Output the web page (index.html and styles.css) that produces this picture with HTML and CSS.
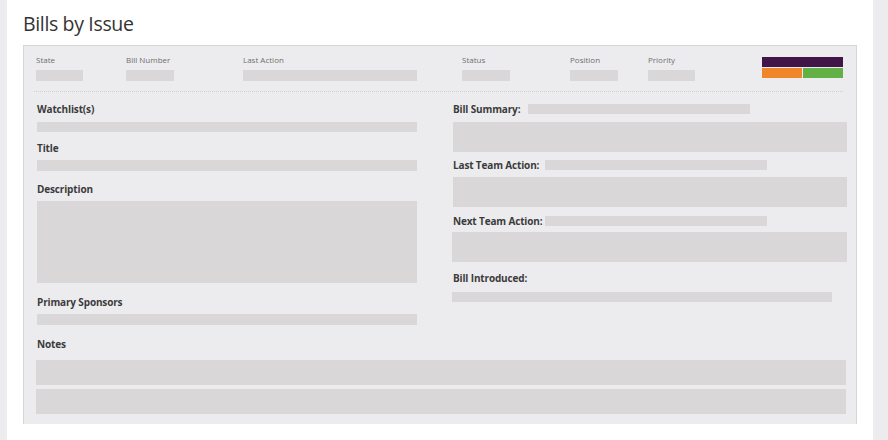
FILE: index.html
```html
<!DOCTYPE html>
<html>
<head>
<meta charset="utf-8">
<link rel="stylesheet" href="styles.css">
</head>
<body>
<div class="panel">
  <h1 class="title">Bills by Issue</h1>
  <div class="card">
    <div class="head">
      <div class="hcol"><div class="hlabel">State</div><div class="hbar w47"></div></div>
      <div class="hcol"><div class="hlabel">Bill Number</div><div class="hbar w48"></div></div>
      <div class="hcol"><div class="hlabel">Last Action</div><div class="hbar w174"></div></div>
      <div class="hcol"><div class="hlabel">Status</div><div class="hbar w48"></div></div>
      <div class="hcol"><div class="hlabel">Position</div><div class="hbar w48"></div></div>
      <div class="hcol"><div class="hlabel">Priority</div><div class="hbar w47"></div></div>
      <div class="colors">
        <div class="c-purple"></div>
        <div class="c-row"><div class="c-orange"></div><div class="c-green"></div></div>
      </div>
    </div>
    <div class="sep"></div>
    <div class="body">
      <div class="left">
        <div class="field f-watch"><div class="label">Watchlist(s)</div><div class="bar h10"></div></div>
        <div class="field f-title"><div class="label">Title</div><div class="bar h11"></div></div>
        <div class="field f-desc"><div class="label">Description</div><div class="bar h82"></div></div>
        <div class="field"><div class="label">Primary Sponsors</div><div class="bar h11"></div></div>
      </div>
      <div class="right">
        <div class="rfield r1">
          <div class="rlabel"><span class="label">Bill Summary:</span><span class="ibar"></span></div>
          <div class="bar big"></div>
        </div>
        <div class="rfield r2">
          <div class="rlabel"><span class="label">Last Team Action:</span><span class="ibar"></span></div>
          <div class="bar big"></div>
        </div>
        <div class="rfield r3">
          <div class="rlabel"><span class="label">Next Team Action:</span><span class="ibar"></span></div>
          <div class="bar big"></div>
        </div>
        <div class="rfield r4">
          <div class="rlabel"><span class="label">Bill Introduced:</span></div>
          <div class="bar intro"></div>
        </div>
      </div>
    </div>
    <div class="notes">
      <div class="label">Notes</div>
      <div class="bar nbar"></div>
      <div class="bar nbar second"></div>
    </div>
  </div>
</div>
</body>
</html>
```
FILE: styles.css
```css
* { box-sizing: border-box; }
html, body { margin: 0; padding: 0; }
body {
  background: #ececee;
  font-family: "Open Sans", "Liberation Sans", sans-serif;
  width: 888px;
  height: 440px;
  overflow: hidden;
}
.panel {
  margin: 0 15px 0 7px;
  background: #ffffff;
  height: 440px;
  padding: 11px 16px 0 16px;
}
.title {
  margin: 0 0 8px 0;
  font-size: 19.5px;
  line-height: 26px;
  letter-spacing: -0.35px;
  font-weight: 400;
  color: #333333;
}
.card {
  background: #ececee;
  border: 1px solid #d6d6d8;
  border-bottom: none;
  height: 379px;
}
.head {
  display: grid;
  grid-template-columns: 90px 117px 219px 108px 78px 114px 81px;
  padding: 8px 0 0 12px;
}
.hlabel {
  font-size: 8px;
  line-height: 11px;
  color: #6f6f6f;
  height: 11px;
  margin-bottom: 5px;
}
.hbar { height: 11px; background: #d9d7d8; }
.w47 { width: 47px; }
.w48 { width: 48px; }
.w174 { width: 174px; }
.colors { padding-top: 3px; }
.c-purple { height: 10px; background: #411547; margin-bottom: 1px; }
.c-row { display: flex; height: 10px; }
.c-orange { width: 40px; background: #ef862c; margin-right: 1px; }
.c-green { flex: 1; background: #63b146; }
.sep {
  margin: 10px 13px 0 10px;
  border-top: 1px dotted #cfcfd1;
}
.body {
  display: flex;
  gap: 35px;
  padding: 10px 9px 0 13px;
}
.left { width: 380px; }
.right { width: 395px; }
.label {
  font-size: 10px;
  line-height: 14px;
  font-weight: 700;
  letter-spacing: -0.15px;
  color: #3b3b3b;
}
.field .label { margin-bottom: 5px; }
.field { margin-bottom: 12px; }
.f-watch .label { margin-bottom: 6px; }
.f-watch { margin-bottom: 9px; }
.f-title { margin-bottom: 11px; }
.f-desc { margin-bottom: 12px; }
.bar { background: #d9d7d8; }
.h10 { height: 10px; }
.h11 { height: 11px; }
.h82 { height: 82px; }
.rlabel {
  display: flex;
  align-items: center;
  gap: 6px;
  height: 14px;
  padding-left: 1px;
}
.ibar { width: 222px; height: 10px; background: #d9d7d8; }
.big { height: 30px; }
.r1 .rlabel { margin-bottom: 6px; gap: 8px; }
.r1 { margin-bottom: 6px; }
.r2 .rlabel { margin-bottom: 5px; }
.r2 { margin-bottom: 7px; }
.r2 .big, .r1 .big { margin-left: 1px; }
.r3 .rlabel { margin-bottom: 4px; gap: 3px; }
.r3 { margin-bottom: 9px; }
.r4 .rlabel { margin-bottom: 7px; }
.intro { width: 380px; height: 10px; }
.notes { padding: 0 10px 0 12px; margin-top: 0; }
.notes .label { margin-left: 1px; margin-bottom: 9px; }
.nbar { height: 25px; }
.nbar.second { margin-top: 4px; }
```
